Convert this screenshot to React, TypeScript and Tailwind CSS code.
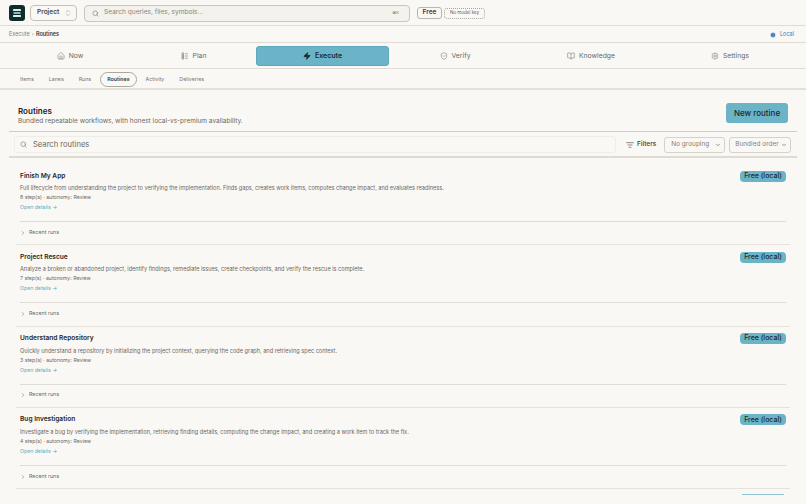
import { Home, Zap, ShieldCheck, BookOpen, Settings, Search, ChevronsUpDown, ChevronRight, ListFilter, Info, ChevronDown } from "lucide-react";

function PlanIcon({ className }: { size?: number; className?: string }) {
  return (
    <svg width="8" height="8" viewBox="0 0 16 16" fill="none" stroke="currentColor" strokeWidth="1.4" className={className}>
      <rect x="2" y="2" width="3.5" height="3" />
      <rect x="2" y="6.5" width="3.5" height="3" />
      <rect x="2" y="11" width="3.5" height="3" />
      <path d="M8 3.5h6M8 8h6M8 12.5h6" />
    </svg>
  );
}

const nav = [
  { label: "Now", Icon: Home, w: "w-[122px]" },
  { label: "Plan", Icon: PlanIcon, w: "w-[125px]" },
  { label: "Execute", Icon: Zap, active: true, w: "w-[133px]" },
  { label: "Verify", Icon: ShieldCheck, w: "w-[132px]" },
  { label: "Knowledge", Icon: BookOpen, w: "w-[140px]" },
  { label: "Settings", Icon: Settings, w: "w-[138px]" },
];
const subs = ["Items", "Lanes", "Runs", "Routines", "Activity", "Deliveries"];
const routines = [
  { name: "Finish My App", desc: "Full lifecycle from understanding the project to verifying the implementation. Finds gaps, creates work items, computes change impact, and evaluates readiness.", steps: 8 },
  { name: "Project Rescue", desc: "Analyze a broken or abandoned project, identify findings, remediate issues, create checkpoints, and verify the rescue is complete.", steps: 7 },
  { name: "Understand Repository", desc: "Quickly understand a repository by initializing the project context, querying the code graph, and retrieving spec context.", steps: 3 },
  { name: "Bug Investigation", desc: "Investigate a bug by verifying the implementation, retrieving finding details, computing the change impact, and creating a work item to track the fix.", steps: 4 },
];

export default function App() {
  return (
    <div className="w-[806px] h-[504px] overflow-hidden bg-[#faf8f5] text-[#23211e] font-['Inter',sans-serif]">
      <header className="h-[26px] flex items-center pl-[9px] pt-[1px] border-b border-[#dfdcd5]">
        <div className="w-4 h-4 rounded-[3px] bg-[#0f2c2d] flex items-center justify-center mr-[5px]">
          <svg width="10" height="10" viewBox="0 0 10 10" fill="#dfe9e7"><rect x="1" y="1" width="8" height="2" rx="0.5" /><rect x="1.5" y="4" width="7" height="2" rx="0.5" fill="#8fb6b8" /><rect x="1" y="7" width="8" height="2" rx="0.5" /></svg>
        </div>
        <div className="w-[47px] h-[16px] rounded-[4px] border border-[#c4c1b9] flex items-center pl-[6px] mr-[7px]">
          <span className="text-[6.5px] font-semibold text-[#4a4843]">Project</span>
          <ChevronsUpDown size={8} className="ml-[5px] text-[#8d8a83]" strokeWidth={1.5} />
        </div>
        <div className="w-[326px] h-[17px] rounded-[4px] border border-[#c9c6bf] bg-[#f3f2ed] flex items-center pl-[7px] pr-[10px] mr-[7px]">
          <Search size={7} className="text-[#77746e] mr-[5px]" />
          <span className="text-[6.6px] text-[#8a8780] flex-1">Search queries, files, symbols...</span>
          <span className="text-[4px] text-[#77746e]">⌘K</span>
        </div>
        <div className="w-[25px] h-[12px] rounded-[3px] border border-[#b9b6ae] flex items-center justify-center text-[6.5px] font-semibold text-[#3b3936] mr-[2px]">Free</div>
        <div className="w-[41px] h-[11px] rounded-[3px] border border-dotted border-[#a8a59e] flex items-center justify-center text-[4.5px] text-[#65625c]">No model key</div>
      </header>
      <div className="h-[17px] flex items-center pl-[9px] pr-[12px] pt-[1px] border-b border-[#dfdcd5] text-[5.5px]">
        <span className="text-[#85827b]">Execute</span>
        <span className="text-[#a3a099] mx-[2px]">›</span>
        <span className="font-semibold text-[#3b3936]">Routines</span>
        <span className="ml-auto flex items-center text-[#3b78b5]">
          <Info size={6} className="mr-[4px] fill-[#1f6fc0] text-[#faf8f5]" />Local
        </span>
      </div>
      <nav className="h-[26px] flex items-center pl-[9px] border-b border-[#dfdcd5]">
        {nav.map(({ label, Icon, active, w }) => (
          <div key={label} className={active ? `${w} h-[20px] pt-[1px] rounded-[3px] bg-[#6bb3c6] border border-[#5fa8bb] flex items-center justify-center text-[7px] font-semibold text-[#1d2a2d]` : `${w} pt-[1px] flex items-center justify-center text-[6.8px] text-[#6b6862]`}>
            <Icon size={8} className={active ? "mr-[4px] fill-[#1d2a2d]" : "mr-[4px] text-[#8d8a83]"} />
            {label}
          </div>
        ))}
      </nav>
      <div className="h-[21px] flex items-center pl-[12.5px] pt-[2px] border-b-2 border-[#e3e0d9]">
        {subs.map((s) => (
          <span key={s} className={s === "Routines" ? "h-[15px] px-[6px] mx-[1.5px] rounded-full border border-[#aaa79f] flex items-center text-[5.3px] font-semibold text-[#3b3936]" : "px-[6px] mx-[1.5px] text-[5.3px] text-[#7a7770]"}>{s}</span>
        ))}
      </div>
      <main className="px-[9px]">
        <div className="h-[35px] flex items-center justify-between px-[9px] border-b border-[#cfccc4] mt-[7px]">
          <div className="leading-none pt-[4px]">
            <div className="text-[8px] font-semibold text-[#23211e] mb-[3px]">Routines</div>
            <div className="text-[6.5px] text-[#6b6862]">Bundled repeatable workflows, with honest local-vs-premium availability.</div>
          </div>
          <button className="w-[62px] h-[20px] mb-[3px] rounded-[3px] bg-[#6bb3c6] text-[8px] font-medium text-[#1d2a2d]">New routine</button>
        </div>
        <div className="h-[26px] flex items-center pl-[5px] pr-[5px] pt-[1px] border-b-2 border-[#dedbd3]">
          <div className="w-[602px] h-[17px] rounded-[3px] border border-[#efede8] bg-[#f9f8f4] flex items-center pl-[5px]">
            <Search size={7} className="text-[#77746e] mr-[6px]" />
            <span className="text-[7.6px] text-[#6b6862]">Search routines</span>
          </div>
          <ListFilter size={8} className="ml-[10px] text-[#55524d]" />
          <span className="ml-[3px] text-[6.5px] font-medium text-[#3b3936]">Filters</span>
          <div className="ml-[8px] w-[61px] h-[16px] rounded-[3px] border border-[#d5d2ca] flex items-center justify-between pl-[6px] pr-[3px] text-[6.5px] text-[#85827b] whitespace-nowrap">No grouping<ChevronDown size={6} className="text-[#3b3936]" /></div>
          <div className="ml-[4px] w-[62px] h-[16px] rounded-[3px] border border-[#d5d2ca] flex items-center justify-between pl-[5px] pr-[3px] text-[6.5px] text-[#85827b] whitespace-nowrap">Bundled order<ChevronDown size={6} className="text-[#3b3936]" /></div>
        </div>
        <div className="mx-[7px] pt-[6px]">
          {routines.map((r) => (
            <section key={r.name} className="h-[81.3px] border-b border-[#e6e3dd] px-[4px]">
              <div className="h-[58px] pt-[6.6px] relative border-b border-[#dfdcd5]">
                <div className="text-[6.6px] font-semibold text-[#2a2825] leading-[10px]">{r.name}</div>
                <div className="text-[5.6px] text-[#6b6862] leading-[8px] mt-[3.4px]">{r.desc}</div>
                <div className="text-[5.2px] text-[#6b6862] leading-[8px] mt-[1px]">{r.steps} step(s) · autonomy: Review</div>
                <div className="text-[5.2px] text-[#63abc0] leading-[8px] mt-[2px]">Open details →</div>
                <span className="absolute right-0 top-[6.6px] w-[46px] h-[11px] rounded-[4px] bg-[#6bb3c6] flex items-center justify-center text-[7px] font-medium text-[#1d2a2d]">Free (local)</span>
              </div>
              <div className="h-[21.5px] flex items-center text-[5.3px] text-[#6b6862]">
                <ChevronRight size={6} className="mr-[3px]" />Recent runs
              </div>
            </section>
          ))}
          <div className="ml-[726px] w-[42px] h-[1px] mt-[5px] bg-[#8fc4d3]" />
        </div>
      </main>
    </div>
  );
}
